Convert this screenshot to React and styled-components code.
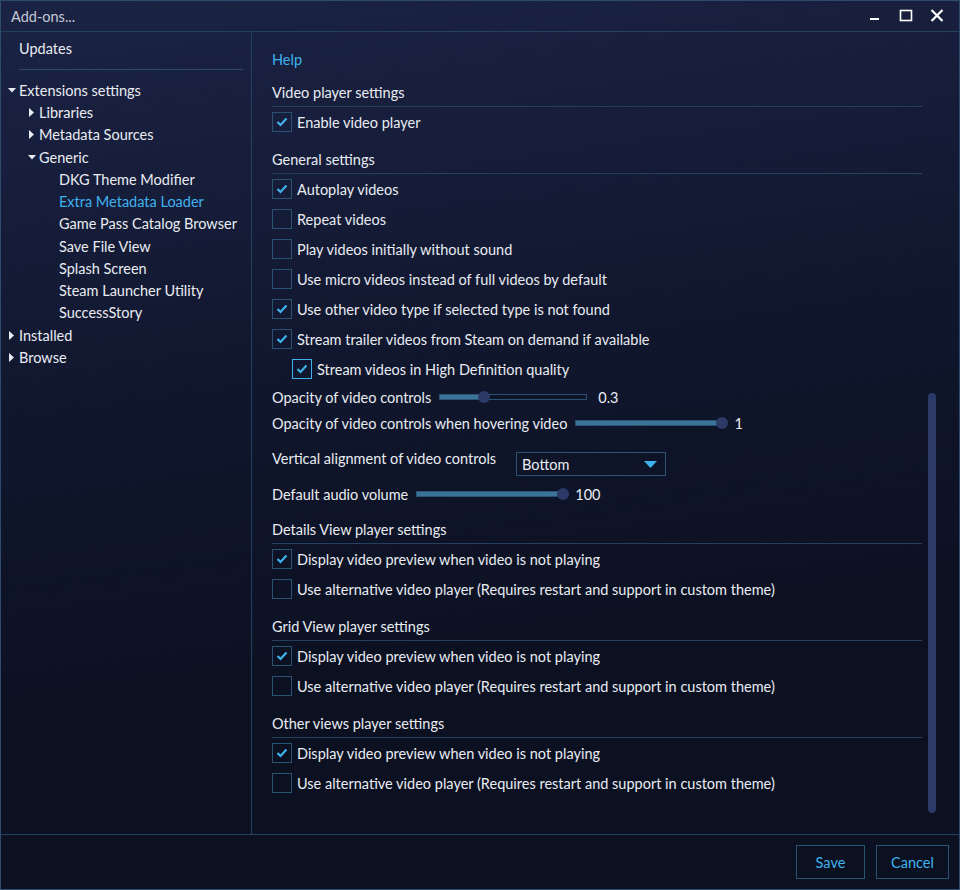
import React from "react";
import styled, { createGlobalStyle } from "styled-components";

const GlobalStyle = createGlobalStyle`
  html, body {
    margin: 0;
    padding: 0;
    background: #0c1122;
  }
  * {
    box-sizing: border-box;
  }
`;

const accent = "#3fb2ee";
const line = "#23415f";
const ctrlBorder = "#2a5272";

const Window = styled.div`
  width: 960px;
  height: 890px;
  display: flex;
  flex-direction: column;
  border: 1px solid #2e4a6c;
  background: linear-gradient(172deg, #1b2344 0%, #171e3b 18%, #10162c 42%, #0c1122 70%, #0c1122 100%);
  font-family: Lato, "Open Sans", sans-serif;
  font-size: 14.5px;
  color: #e9ecf2;
  overflow: hidden;
`;

const TitleBar = styled.div`
  height: 31px;
  flex: none;
  display: flex;
  align-items: center;
  justify-content: space-between;
  padding: 0 14px 0 10px;
  border-bottom: 1px solid ${line};
`;

const Title = styled.span`
  color: #c4c9d6;
`;

const WinButtons = styled.div`
  display: flex;
  align-items: center;
  gap: 15px;
`;

const WinButton = styled.svg`
  width: 16px;
  height: 16px;
  display: block;
`;

const Body = styled.div`
  flex: 1;
  display: flex;
  min-height: 0;
`;

const Sidebar = styled.div`
  width: 251px;
  flex: none;
  border-right: 1px solid ${line};
  padding: 5px 8px 0 0;
`;

const TreeRow = styled.div`
  height: 22.25px;
  display: flex;
  align-items: center;
  padding-left: ${(p) => p.$indent}px;
  color: ${(p) => (p.$active ? accent : "#e9ecf2")};
  white-space: nowrap;
`;

const Caret = styled.span`
  width: ${(p) => p.$w}px;
  flex: none;
  display: flex;
  align-items: center;
`;

const SideSeparator = styled.div`
  height: 1px;
  background: #2a4a66;
  margin: 10px 0 9px 18px;
`;

const Content = styled.div`
  flex: 1;
  display: flex;
  min-width: 0;
`;

const Settings = styled.div`
  flex: 1;
  padding: 18px 0 0 20px;
`;

const HelpLink = styled.div`
  color: ${accent};
  line-height: 20px;
  margin-bottom: 13px;
`;

const Section = styled.div`
  & + & {
    margin-top: 13px;
  }
`;

const SectionHeader = styled.div`
  line-height: 20px;
  padding-bottom: 3px;
  border-bottom: 1px solid ${line};
`;

const CheckRow = styled.div`
  height: 30px;
  display: flex;
  align-items: center;
  gap: 5px;
  padding-left: ${(p) => p.$indent || 0}px;
`;

const Box = styled.span`
  width: 20px;
  height: 20px;
  flex: none;
  border: 1px solid ${(p) => (p.$focus ? accent : ctrlBorder)};
  display: flex;
  align-items: center;
  justify-content: center;
`;

const SliderRow = styled.div`
  height: 26px;
  display: flex;
  align-items: center;
`;

const SliderLabel = styled.span`
  margin-right: 8px;
`;

const Track = styled.div`
  position: relative;
  width: 148px;
  height: 6px;
  border: 1px solid ${ctrlBorder};
  background: #0d1426;
  margin-right: 11px;
`;

const Fill = styled.div`
  height: 100%;
  background: #3a7498;
`;

const Thumb = styled.div`
  position: absolute;
  top: 50%;
  width: 12px;
  height: 12px;
  margin: -6px 0 0 -6px;
  border-radius: 50%;
  background: #2b3a66;
`;

const ComboRow = styled.div`
  display: flex;
  align-items: flex-start;
  margin-top: 16px;
  margin-bottom: 5px;
`;

const ComboLabel = styled.span`
  line-height: 14px;
  margin-right: 20px;
`;

const Combo = styled.div`
  width: 150px;
  height: 24px;
  border: 1px solid ${ctrlBorder};
  display: flex;
  align-items: center;
  justify-content: space-between;
  padding: 0 8px 0 5px;
`;

const ScrollColumn = styled.div`
  width: 8px;
  flex: none;
  margin: 0 23px 0 6px;
  padding-top: 361px;
`;

const ScrollThumb = styled.div`
  width: 8px;
  height: 420px;
  border-radius: 4px;
  background: #2b3a66;
`;

const Footer = styled.div`
  height: 55px;
  flex: none;
  border-top: 1px solid ${line};
  display: flex;
  justify-content: flex-end;
  align-items: flex-start;
  gap: 11px;
  padding: 10px 10px 0 0;
`;

const Button = styled.button`
  height: 34px;
  min-width: ${(p) => p.$w}px;
  background: transparent;
  border: 1px solid ${ctrlBorder};
  color: ${accent};
  font: inherit;
  padding: 0 12px;
`;

const CaretRight = () => (
  <svg width="5" height="9" viewBox="0 0 5 9">
    <path d="M0 0 L5 4.5 L0 9 Z" fill="#e9ecf2" />
  </svg>
);

const CaretDown = () => (
  <svg width="8" height="5" viewBox="0 0 8 5">
    <path d="M0 0 L8 0 L4 4.5 Z" fill="#e9ecf2" />
  </svg>
);

const Check = () => (
  <svg width="12" height="10" viewBox="0 0 12 10">
    <path d="M1.5 5 L4.5 8 L10.5 1.5" stroke={accent} strokeWidth="2.2" fill="none" />
  </svg>
);

const tree = [
  { label: "Extensions settings", indent: 7, caret: "down" },
  { label: "Libraries", indent: 28, caret: "right" },
  { label: "Metadata Sources", indent: 28, caret: "right" },
  { label: "Generic", indent: 27, caret: "down" },
  { label: "DKG Theme Modifier", indent: 58 },
  { label: "Extra Metadata Loader", indent: 58, active: true },
  { label: "Game Pass Catalog Browser", indent: 58 },
  { label: "Save File View", indent: 58 },
  { label: "Splash Screen", indent: 58 },
  { label: "Steam Launcher Utility", indent: 58 },
  { label: "SuccessStory", indent: 58 },
  { label: "Installed", indent: 8, caret: "right" },
  { label: "Browse", indent: 8, caret: "right" },
];

const CheckItem = ({ checked, focus, indent, children }) => (
  <CheckRow $indent={indent}>
    <Box $focus={focus}>{checked && <Check />}</Box>
    <span>{children}</span>
  </CheckRow>
);

const Slider = ({ label, value, max, text }) => {
  const pct = (value / max) * 100;
  return (
    <SliderRow>
      <SliderLabel>{label}</SliderLabel>
      <Track>
        <Fill style={{ width: `${pct}%` }} />
        <Thumb style={{ left: `${pct}%` }} />
      </Track>
      <span>{text}</span>
    </SliderRow>
  );
};

const altPlayer = "Use alternative video player (Requires restart and support in custom theme)";
const preview = "Display video preview when video is not playing";

export default function App() {
  return (
    <>
      <GlobalStyle />
      <Window>
        <TitleBar>
          <Title>Add-ons...</Title>
          <WinButtons>
            <WinButton viewBox="0 0 16 16">
              <rect x="3" y="10" width="9" height="2" fill="#fff" />
            </WinButton>
            <WinButton viewBox="0 0 16 16">
              <rect x="2.5" y="2.5" width="11" height="10" stroke="#fff" strokeWidth="1.6" fill="none" />
            </WinButton>
            <WinButton viewBox="0 0 16 16">
              <path d="M2.5 2 L13.5 13 M13.5 2 L2.5 13" stroke="#fff" strokeWidth="2.2" />
            </WinButton>
          </WinButtons>
        </TitleBar>
        <Body>
          <Sidebar>
            <TreeRow $indent={18}>Updates</TreeRow>
            <SideSeparator />
            {tree.map((t) => (
              <TreeRow key={t.label} $indent={t.indent} $active={t.active}>
                {t.caret && (
                  <Caret $w={t.caret === "down" ? 11 : 10}>
                    {t.caret === "down" ? <CaretDown /> : <CaretRight />}
                  </Caret>
                )}
                {t.label}
              </TreeRow>
            ))}
          </Sidebar>
          <Content>
            <Settings>
              <HelpLink>Help</HelpLink>
              <Section>
                <SectionHeader>Video player settings</SectionHeader>
                <CheckItem checked>Enable video player</CheckItem>
              </Section>
              <Section>
                <SectionHeader>General settings</SectionHeader>
                <CheckItem checked>Autoplay videos</CheckItem>
                <CheckItem>Repeat videos</CheckItem>
                <CheckItem>Play videos initially without sound</CheckItem>
                <CheckItem>Use micro videos instead of full videos by default</CheckItem>
                <CheckItem checked>Use other video type if selected type is not found</CheckItem>
                <CheckItem checked>Stream trailer videos from Steam on demand if available</CheckItem>
                <CheckItem checked focus indent={20}>Stream videos in High Definition quality</CheckItem>
                <Slider label="Opacity of video controls" value={0.3} max={1} text="0.3" />
                <Slider label="Opacity of video controls when hovering video" value={1} max={1} text="1" />
                <ComboRow>
                  <ComboLabel>Vertical alignment of video controls</ComboLabel>
                  <Combo>
                    <span>Bottom</span>
                    <svg width="13" height="7" viewBox="0 0 13 7">
                      <path d="M0 0 L13 0 L6.5 7 Z" fill={accent} />
                    </svg>
                  </Combo>
                </ComboRow>
                <Slider label="Default audio volume" value={100} max={100} text="100" />
              </Section>
              <Section>
                <SectionHeader>Details View player settings</SectionHeader>
                <CheckItem checked>{preview}</CheckItem>
                <CheckItem>{altPlayer}</CheckItem>
              </Section>
              <Section>
                <SectionHeader>Grid View player settings</SectionHeader>
                <CheckItem checked>{preview}</CheckItem>
                <CheckItem>{altPlayer}</CheckItem>
              </Section>
              <Section>
                <SectionHeader>Other views player settings</SectionHeader>
                <CheckItem checked>{preview}</CheckItem>
                <CheckItem>{altPlayer}</CheckItem>
              </Section>
            </Settings>
            <ScrollColumn>
              <ScrollThumb />
            </ScrollColumn>
          </Content>
        </Body>
        <Footer>
          <Button $w={69}>Save</Button>
          <Button $w={73}>Cancel</Button>
        </Footer>
      </Window>
    </>
  );
}
